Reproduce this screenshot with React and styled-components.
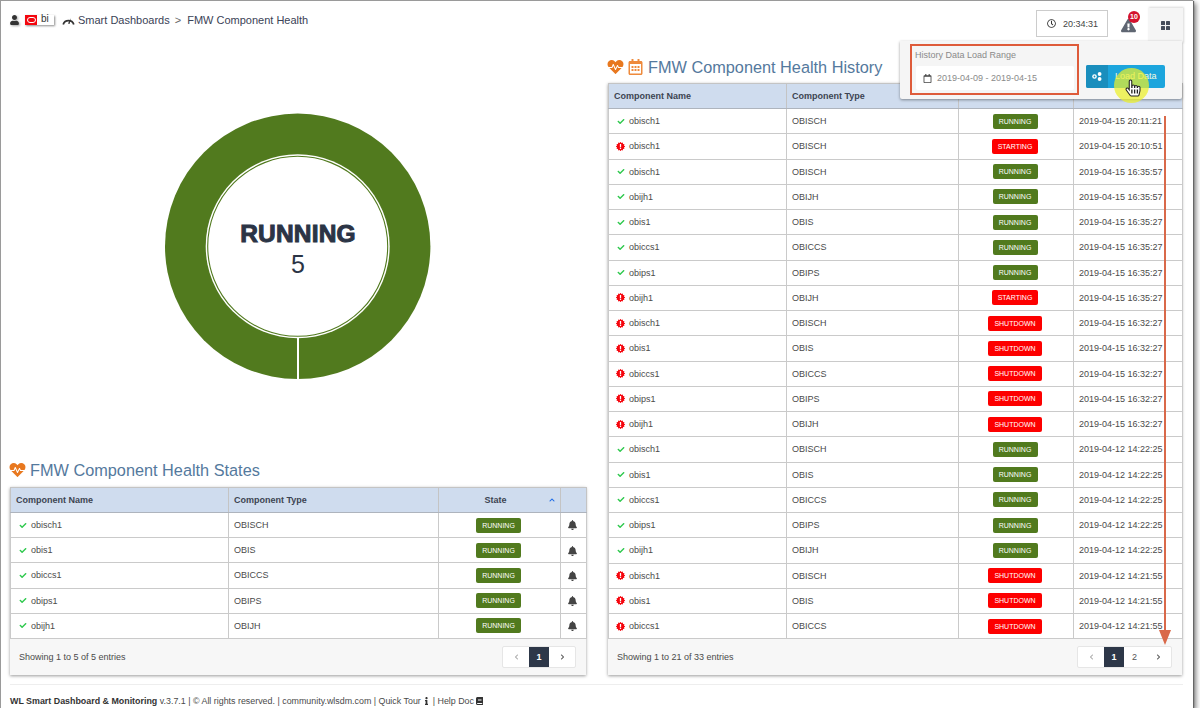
import styled, { createGlobalStyle } from "styled-components";
import {
  FaBell,
  FaBook,
  FaCheck,
  FaChevronLeft,
  FaChevronRight,
  FaChevronUp,
  FaExclamationTriangle,
  FaHandPointer,
  FaHeartbeat,
  FaInfo,
  FaRegCalendar,
  FaRegCalendarAlt,
  FaRegClock,
  FaUser,
} from "react-icons/fa";

const GlobalStyle = createGlobalStyle`
  html, body {
    margin: 0;
    padding: 0;
    background: #fff;
    font-family: "Liberation Sans", Arial, sans-serif;
  }
`;

const Screen = styled.div`
  position: relative;
  box-sizing: border-box;
  width: 1193px;
  height: 708px;
  background: #fff;
  border-top: 1px solid #9a9a9a;
  border-left: 1px solid #9a9a9a;
  padding: 0 10px 0 9px;
  box-shadow: 1px 1px 1px #666, 3px 3px 5px rgba(0, 0, 0, 0.5);
`;

const Header = styled.header`
  display: flex;
  align-items: center;
  height: 40px;
  color: #3a4256;
  font-size: 11px;
`;

const UserIcon = styled(FaUser)`
  width: 9px;
  height: 10px;
  color: #333;
  margin-top: -3px;
  filter: drop-shadow(1px 1px 1px rgba(0, 0, 0, 0.35));
`;

const BiLogo = styled.span`
  display: flex;
  align-items: stretch;
  width: 29px;
  height: 10px;
  margin: -3px 8px 0 6px;
  background: #fff;
  box-shadow: 1px 1px 2px rgba(0, 0, 0, 0.45);
  font-size: 10px;
  line-height: 7px;
  color: #333;
`;

const OracleMark = styled.span`
  display: flex;
  align-items: center;
  justify-content: center;
  width: 12px;
  margin-right: 4px;
  background: #f3070f;
  &::before {
    content: "";
    width: 7px;
    height: 4px;
    border: 1px solid #fff;
    border-radius: 3px;
  }
`;

const GaugeIcon = styled.svg`
  width: 13px;
  height: 10px;
  margin: -3px 3px 0 0;
`;

const Crumb = styled.span`
  margin-top: -3px;
  white-space: nowrap;
`;

const CrumbSep = styled.span`
  margin: -3px 6px 0 5px;
  color: #666;
`;

const HeaderRight = styled.div`
  display: flex;
  align-items: center;
  margin-left: auto;
`;

const ClockBox = styled.div`
  display: flex;
  align-items: center;
  box-sizing: border-box;
  width: 72px;
  height: 27px;
  padding-left: 10px;
  margin-top: 5px;
  border: 1px solid #ccc;
  font-size: 9px;
  color: #444;
  svg {
    width: 9px;
    height: 9px;
    margin-right: 7px;
    color: #333;
  }
`;

const AlertWrap = styled.div`
  position: relative;
  display: flex;
  width: 15px;
  height: 17px;
  margin: 5px 12px 0 13px;
  color: #5f6672;
  svg {
    width: 15px;
    height: 15px;
    margin-top: 3px;
  }
`;

const AlertBadge = styled.span`
  position: absolute;
  top: -4px;
  left: 7px;
  width: 12px;
  height: 12px;
  line-height: 12px;
  border-radius: 50%;
  background: #d4122d;
  color: #fff;
  font-size: 7px;
  font-weight: bold;
  text-align: center;
`;

const MenuTab = styled.div`
  display: flex;
  align-items: center;
  justify-content: center;
  width: 35px;
  height: 36px;
  margin-top: 9px;
  background: #f5f5f5;
  box-shadow: 1px -1px 2px rgba(0, 0, 0, 0.15);
`;

const GridIcon = styled.svg`
  width: 9px;
  height: 9px;
  fill: #454c5a;
`;

const Main = styled.main`
  display: grid;
  grid-template-columns: 576px 574px;
  column-gap: 22px;
`;

const LeftCol = styled.section`
  padding-top: 72px;
`;

const RightCol = styled.section`
  padding-top: 16px;
`;

const DonutWrap = styled.div`
  display: flex;
  justify-content: center;
  margin-left: -1px;
  height: 267px;
  margin-bottom: 80px;
`;

const Heading = styled.h2`
  display: flex;
  align-items: center;
  height: 20px;
  margin: 0 0 ${(p) => p.$gap}px;
  font-size: 16.3px;
  font-weight: normal;
  color: #54799d;
  white-space: nowrap;
`;

const HeartIcon = styled(FaHeartbeat)`
  width: 17px;
  height: 16px;
  margin: 0 4px 0 -1px;
  color: #e8781f;
`;

const CalIcon = styled(FaRegCalendarAlt)`
  width: 15px;
  height: 16px;
  margin-right: 5px;
  color: #ee8a3c;
`;

const Panel = styled.div`
  background: #f7f7f7;
  box-shadow: 0 1px 3px rgba(0, 0, 0, 0.4);
`;

const Table = styled.table`
  width: 100%;
  table-layout: fixed;
  border-collapse: collapse;
  background: #fff;
  font-size: 9px;
  color: #4a4a4a;
`;

const Col = styled.col`
  width: ${(p) => p.$w}px;
`;

const Th = styled.th`
  position: relative;
  box-sizing: border-box;
  height: 25px;
  padding: ${(p) => (p.$center ? "0 13px 0 5px" : "0 5px")};
  background: #cfdcee;
  border: 1px solid #c4c4c4;
  border-bottom-color: #aeb4bd;
  color: #3d4452;
  font-weight: bold;
  text-align: ${(p) => (p.$center ? "center" : "left")};
`;

const SortCaret = styled(FaChevronUp)`
  position: absolute;
  right: 4px;
  top: 9px;
  width: 8px;
  height: 6px;
  color: #1c6be8;
`;

const Td = styled.td`
  box-sizing: border-box;
  height: ${(p) => p.$h}px;
  padding: ${(p) => (p.$center ? "0 7px 0 5px" : "0 5px")};
  border: 1px solid #cacaca;
  white-space: nowrap;
  overflow: hidden;
  text-align: ${(p) => (p.$center ? "center" : "left")};
`;

const NameCell = styled.div`
  display: flex;
  align-items: center;
  padding-left: 2px;
`;

const StatusSlot = styled.span`
  display: inline-flex;
  justify-content: center;
  width: 9px;
  margin-right: 4px;
`;

const CheckIcon = styled(FaCheck)`
  width: 8px;
  height: 7px;
  color: #2fc94e;
`;

const Badge = styled.span`
  display: inline-block;
  box-sizing: border-box;
  height: 15px;
  line-height: 15px;
  min-width: 45px;
  padding: 0 6px;
  border-radius: 2px;
  font-size: 7px;
  text-align: center;
  vertical-align: middle;
  color: #fff;
  background: ${(p) => (p.$state === "RUNNING" ? "#517a1e" : "#fd0000")};
`;

const BellIcon = styled(FaBell)`
  width: 9px;
  height: 10px;
  color: #444;
  vertical-align: middle;
`;

const TableFooter = styled.div`
  display: flex;
  align-items: center;
  justify-content: space-between;
  box-sizing: border-box;
  height: 36px;
  padding: 0 10px 0 9px;
  font-size: 9px;
  color: #4a4a4a;
`;

const Pager = styled.div`
  display: flex;
  height: 20px;
  background: #fff;
  border: 1px solid #e6e6e6;
  border-radius: 2px;
`;

const PageButton = styled.span`
  display: flex;
  align-items: center;
  justify-content: center;
  width: ${(p) => (p.$arrow ? 26 : p.$active ? 20 : 21)}px;
  background: ${(p) => (p.$active ? "#2d3748" : "transparent")};
  color: ${(p) => (p.$active ? "#fff" : "#555")};
  font-size: 9px;
  font-weight: ${(p) => (p.$active ? "bold" : "normal")};
  svg {
    width: 5px;
    height: 6px;
    color: ${(p) => (p.$muted ? "#aaa" : "#555")};
  }
`;

const Footer = styled.footer`
  margin-top: 9px;
  padding-top: 11px;
  border-top: 1px solid #eee;
  font-size: 8.9px;
  color: #4a4a4a;
  b {
    color: #333;
  }
  svg {
    width: 7px;
    height: 8px;
    color: #333;
    vertical-align: -1px;
  }
`;

const Popover = styled.div`
  position: absolute;
  top: 40px;
  left: 899px;
  display: flex;
  align-items: flex-start;
  box-sizing: border-box;
  width: 282px;
  height: 58px;
  padding: 3px 0 0 10px;
  background: #f5f5f5;
  border-radius: 0 0 2px 2px;
  box-shadow: 0 1px 3px rgba(0, 0, 0, 0.4);
`;

const RangeBox = styled.div`
  box-sizing: border-box;
  width: 169px;
  height: 51px;
  padding: 3px 3px 0 4px;
  border: 2px solid #de5b3a;
`;

const RangeLabel = styled.div`
  height: 17px;
  margin-left: -1px;
  font-size: 9px;
  line-height: 12px;
  color: #8a8a8a;
`;

const DateInput = styled.div`
  display: flex;
  align-items: center;
  height: 24px;
  padding-left: 7px;
  background: #fff;
  border-radius: 2px;
  font-size: 9px;
  color: #8a8a8a;
  svg {
    width: 9px;
    height: 9px;
    margin-right: 5px;
    color: #444;
  }
`;

const LoadButton = styled.div`
  display: flex;
  width: 79px;
  height: 23px;
  margin: 21px 0 0 7px;
  border-radius: 2px;
  overflow: hidden;
  background: #1ca5dd;
  color: #f4fbe0;
  font-size: 9px;
  line-height: 23px;
`;

const LoadIconSlot = styled.span`
  display: flex;
  align-items: center;
  justify-content: center;
  width: 22px;
  margin-right: 7px;
  background: #1a8ebd;
`;

const ShareIcon = styled.svg`
  width: 10px;
  height: 9px;
  fill: #fff;
`;

const Highlight = styled.div`
  position: absolute;
  top: 67px;
  left: 1113px;
  width: 35px;
  height: 35px;
  border-radius: 50%;
  background: rgba(235, 240, 40, 0.72);
`;

const HandCursor = styled.div`
  position: absolute;
  top: 79px;
  left: 1125px;
  svg {
    display: block;
    width: 14px;
    height: 16px;
    fill: #fff;
    stroke: #222;
    stroke-width: 34px;
    overflow: visible;
  }
`;

const ArrowSvg = styled.svg`
  position: absolute;
  top: 115px;
  left: 1155px;
  width: 18px;
  height: 530px;
`;

const Burst = () => {
  const pts = [];
  for (let i = 0; i < 24; i++) {
    const r = i % 2 ? 3.9 : 5.2;
    const a = (i / 24) * Math.PI * 2;
    pts.push(`${5 + r * Math.cos(a)},${5 + r * Math.sin(a)}`);
  }
  return (
    <svg width="9" height="9" viewBox="0 0 10 10">
      <polygon points={pts.join(" ")} fill="#f5060e" />
      <rect x="4.3" y="2.2" width="1.4" height="3.6" fill="#fff" />
      <rect x="4.3" y="6.4" width="1.4" height="1.4" fill="#fff" />
    </svg>
  );
};

const statesRows = [
  ["obisch1", "OBISCH"],
  ["obis1", "OBIS"],
  ["obiccs1", "OBICCS"],
  ["obips1", "OBIPS"],
  ["obijh1", "OBIJH"],
];

const historyRows = [
  ["obisch1", "OBISCH", "RUNNING", "2019-04-15 20:11:21"],
  ["obisch1", "OBISCH", "STARTING", "2019-04-15 20:10:51"],
  ["obisch1", "OBISCH", "RUNNING", "2019-04-15 16:35:57"],
  ["obijh1", "OBIJH", "RUNNING", "2019-04-15 16:35:57"],
  ["obis1", "OBIS", "RUNNING", "2019-04-15 16:35:27"],
  ["obiccs1", "OBICCS", "RUNNING", "2019-04-15 16:35:27"],
  ["obips1", "OBIPS", "RUNNING", "2019-04-15 16:35:27"],
  ["obijh1", "OBIJH", "STARTING", "2019-04-15 16:35:27"],
  ["obisch1", "OBISCH", "SHUTDOWN", "2019-04-15 16:32:27"],
  ["obis1", "OBIS", "SHUTDOWN", "2019-04-15 16:32:27"],
  ["obiccs1", "OBICCS", "SHUTDOWN", "2019-04-15 16:32:27"],
  ["obips1", "OBIPS", "SHUTDOWN", "2019-04-15 16:32:27"],
  ["obijh1", "OBIJH", "SHUTDOWN", "2019-04-15 16:32:27"],
  ["obisch1", "OBISCH", "RUNNING", "2019-04-12 14:22:25"],
  ["obis1", "OBIS", "RUNNING", "2019-04-12 14:22:25"],
  ["obiccs1", "OBICCS", "RUNNING", "2019-04-12 14:22:25"],
  ["obips1", "OBIPS", "RUNNING", "2019-04-12 14:22:25"],
  ["obijh1", "OBIJH", "RUNNING", "2019-04-12 14:22:25"],
  ["obisch1", "OBISCH", "SHUTDOWN", "2019-04-12 14:21:55"],
  ["obis1", "OBIS", "SHUTDOWN", "2019-04-12 14:21:55"],
  ["obiccs1", "OBICCS", "SHUTDOWN", "2019-04-12 14:21:55"],
];

const Donut = () => (
  <svg width="266" height="267" viewBox="0 0 266 267">
    <circle cx="132.7" cy="133.3" r="132.7" fill="#517a1e" />
    <circle cx="132.7" cy="133.3" r="92" fill="#fff" />
    <circle cx="132.7" cy="133.3" r="90" fill="none" stroke="#517a1e" strokeWidth="1.1" />
    <rect x="132" y="224" width="2" height="43" fill="#fff" />
    <text
      x="133"
      y="129"
      textAnchor="middle"
      fontFamily="Liberation Sans"
      fontWeight="bold"
      fontSize="24.5"
      letterSpacing="0.2"
      fill="#2b3445"
      stroke="#2b3445"
      strokeWidth="1"
    >
      RUNNING
    </text>
    <text x="133" y="160" textAnchor="middle" fontFamily="Liberation Sans" fontSize="25" fill="#2b3445">
      5
    </text>
  </svg>
);

const Status = ({ state }) => (
  <StatusSlot>{state === "RUNNING" ? <CheckIcon /> : <Burst />}</StatusSlot>
);

const Pagination = ({ pages }) => (
  <Pager>
    <PageButton $arrow $muted>
      <FaChevronLeft />
    </PageButton>
    {pages.map((page, i) => (
      <PageButton key={page} $active={i === 0}>
        {page}
      </PageButton>
    ))}
    <PageButton $arrow>
      <FaChevronRight />
    </PageButton>
  </Pager>
);

export default function App() {
  return (
    <>
      <GlobalStyle />
      <Screen>
        <Header>
          <UserIcon />
          <BiLogo>
            <OracleMark />
            bi
          </BiLogo>
          <GaugeIcon viewBox="0 0 13 10">
            <path d="M1.2 9.5A5.6 5.6 0 0 1 11.8 9.5" fill="none" stroke="#333" strokeWidth="1.8" />
            <path d="M6 8.5L8.8 3.2L7.6 9Z" fill="#333" />
          </GaugeIcon>
          <Crumb>Smart Dashboards</Crumb>
          <CrumbSep>&gt;</CrumbSep>
          <Crumb>FMW Component Health</Crumb>
          <HeaderRight>
            <ClockBox>
              <FaRegClock />
              20:34:31
            </ClockBox>
            <AlertWrap>
              <FaExclamationTriangle />
              <AlertBadge>10</AlertBadge>
            </AlertWrap>
            <MenuTab>
              <GridIcon viewBox="0 0 9 9">
                <rect width="4" height="4" rx="0.6" />
                <rect x="5" width="4" height="4" rx="0.6" />
                <rect y="5" width="4" height="4" rx="0.6" />
                <rect x="5" y="5" width="4" height="4" rx="0.6" />
              </GridIcon>
            </MenuTab>
          </HeaderRight>
        </Header>

        <Main>
          <LeftCol>
            <DonutWrap>
              <Donut />
            </DonutWrap>
            <Heading $gap={7}>
              <HeartIcon />
              FMW Component Health States
            </Heading>
            <Panel>
              <Table>
                <colgroup>
                  <Col $w={218} />
                  <Col $w={210} />
                  <Col $w={122} />
                  <Col $w={26} />
                </colgroup>
                <thead>
                  <tr>
                    <Th>Component Name</Th>
                    <Th>Component Type</Th>
                    <Th $center>
                      State
                      <SortCaret />
                    </Th>
                    <Th />
                  </tr>
                </thead>
                <tbody>
                  {statesRows.map(([name, type]) => (
                    <tr key={name}>
                      <Td $h={25.2}>
                        <NameCell>
                          <Status state="RUNNING" />
                          {name}
                        </NameCell>
                      </Td>
                      <Td $h={25.2}>{type}</Td>
                      <Td $h={25.2} $center>
                        <Badge $state="RUNNING">RUNNING</Badge>
                      </Td>
                      <Td $h={25.2} $center>
                        <BellIcon />
                      </Td>
                    </tr>
                  ))}
                </tbody>
              </Table>
              <TableFooter>
                Showing 1 to 5 of 5 entries
                <Pagination pages={[1]} />
              </TableFooter>
            </Panel>
          </LeftCol>

          <RightCol>
            <Heading $gap={6}>
              <HeartIcon />
              <CalIcon />
              FMW Component Health History
            </Heading>
            <Panel>
              <Table>
                <colgroup>
                  <Col $w={178} />
                  <Col $w={172} />
                  <Col $w={115} />
                  <Col $w={109} />
                </colgroup>
                <thead>
                  <tr>
                    <Th>Component Name</Th>
                    <Th>Component Type</Th>
                    <Th />
                    <Th />
                  </tr>
                </thead>
                <tbody>
                  {historyRows.map(([name, type, state, time], i) => (
                    <tr key={i}>
                      <Td $h={25.25}>
                        <NameCell>
                          <Status state={state} />
                          {name}
                        </NameCell>
                      </Td>
                      <Td $h={25.25}>{type}</Td>
                      <Td $h={25.25} $center>
                        <Badge $state={state}>{state}</Badge>
                      </Td>
                      <Td $h={25.25}>{time}</Td>
                    </tr>
                  ))}
                </tbody>
              </Table>
              <TableFooter>
                Showing 1 to 21 of 33 entries
                <Pagination pages={[1, 2]} />
              </TableFooter>
            </Panel>
          </RightCol>
        </Main>

        <Footer>
          <b>WL Smart Dashboard &amp; Monitoring</b> v.3.7.1 | © All rights reserved. | community.wlsdm.com | Quick Tour{" "}
          <FaInfo /> | Help Doc <FaBook />
        </Footer>

        <Popover>
          <RangeBox>
            <RangeLabel>History Data Load Range</RangeLabel>
            <DateInput>
              <FaRegCalendar />
              2019-04-09 - 2019-04-15
            </DateInput>
          </RangeBox>
          <LoadButton>
            <LoadIconSlot>
              <ShareIcon viewBox="0 0 10 9">
                <circle cx="2.5" cy="4.5" r="2.3" />
                <circle cx="7.6" cy="2" r="1.9" />
                <circle cx="7.6" cy="7" r="1.9" />
                <circle cx="2.5" cy="4.5" r="0.9" fill="#1a8ebd" />
              </ShareIcon>
            </LoadIconSlot>
            Load Data
          </LoadButton>
        </Popover>

        <ArrowSvg viewBox="0 0 18 530">
          <rect x="8" y="0" width="2" height="516" fill="#d9694a" />
          <polygon points="3,514 15,514 9,529" fill="#d9694a" />
        </ArrowSvg>

        <Highlight />
        <HandCursor>
          <FaHandPointer />
        </HandCursor>
      </Screen>
    </>
  );
}
